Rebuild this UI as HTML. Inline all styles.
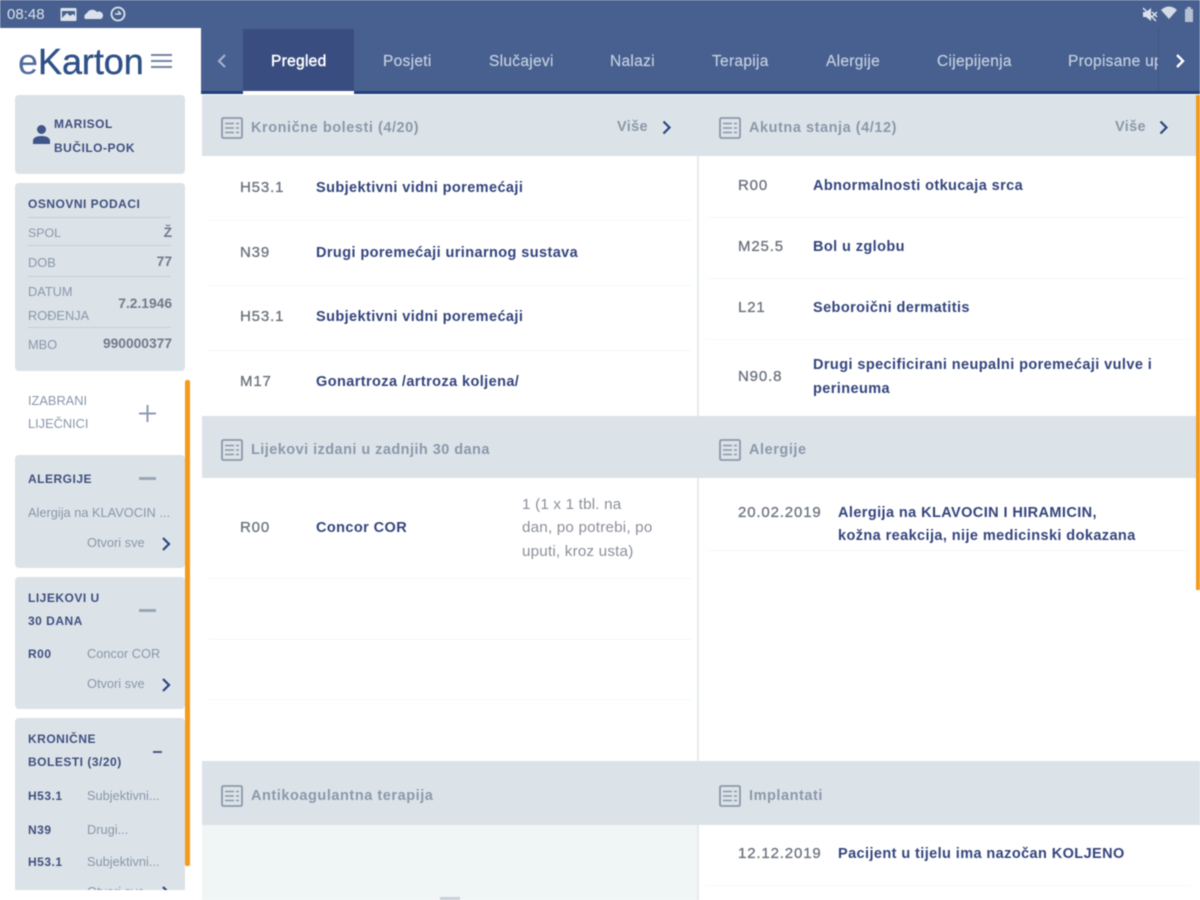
<!DOCTYPE html>
<html><head><meta charset="utf-8"><style>
html,body{margin:0;padding:0;width:1200px;height:900px;overflow:hidden;background:#fff}
body{font-family:"Liberation Sans",sans-serif;position:relative}
#r{position:absolute;left:0;top:0;width:1200px;height:900px;overflow:hidden;filter:blur(.6px)}
.b{position:absolute}
.t{position:absolute;white-space:nowrap;line-height:24px;height:24px}
.g{background:#dce3e8}
.card{position:absolute;left:15px;width:170px;background:#dce3e8;border-radius:4px}
.h{font-size:14.5px;color:#7f8ea3;letter-spacing:.55px;font-weight:700;opacity:.88}
.code{font-size:15px;color:#6c737e;letter-spacing:.85px;font-weight:400;-webkit-text-stroke:.3px #6c737e;margin-top:1px}
.name{font-size:14.5px;color:#33447c;letter-spacing:.41px;font-weight:700;margin-top:1px}
.tab{font-size:15.5px;color:#c3cfe0;top:50px;letter-spacing:.3px;-webkit-text-stroke:.2px #c3cfe0}
.s{font-size:12px;color:#3f4f80;font-weight:700;letter-spacing:.5px}
.l{font-size:12.8px;color:#8997ab}
.v{font-size:13.8px;color:#6f7a8a}
.line{position:absolute;height:1px;background:#c4ced7}
.sep{position:absolute;height:1px;background:#f6f7f8}
.p{font-size:15.2px;color:#8a8f98;letter-spacing:.2px;margin-top:1px}
svg{position:absolute;overflow:visible}
</style></head><body><div id="r">

<div class="b" style="left:0;top:0;width:1200px;height:28px;background:#48608f"></div>
<div class="t" style="left:7px;top:3px;font-size:15px;color:#dbe2ec">08:48</div>
<svg style="left:60px;top:7px" width="17" height="15"><rect x="0.5" y="1" width="16" height="13" rx="1" fill="#dbe2ec"/><path d="M2 11 7 6 10 9 13 7 15 9V4H2Z" fill="#48608f"/></svg>
<svg style="left:84px;top:8px" width="18" height="11"><path d="M1 11a4 4 0 0 1 2-6 6 6 0 0 1 10-1 4 4 0 0 1 4 7Z" fill="#dbe2ec"/></svg>
<svg style="left:110px;top:6px" width="17" height="17"><circle cx="8" cy="8" r="6.5" fill="none" stroke="#dbe2ec" stroke-width="1.8"/><path d="M5 8h6M8 5l3 3" stroke="#dbe2ec" stroke-width="1.5" fill="none"/></svg>
<svg style="left:1142px;top:7px" width="16" height="15"><path d="M1 5h3l5-4v13l-5-4H1Z" fill="#dbe2ec"/><path d="M10 5l5 5M15 5l-5 5M1 1l13 13" stroke="#dbe2ec" stroke-width="1.5"/></svg>
<svg style="left:1161px;top:6px" width="17" height="14"><path d="M0 4a11 11 0 0 1 16 0L8 13Z" fill="#d3dbe6"/></svg>
<svg style="left:1184px;top:7px" width="10" height="15"><path d="M1 2h2V0h4v2h2v13H1Z" fill="#b5c1d3"/></svg>

<div class="b" style="left:0;top:28px;width:201px;height:872px;background:#fff"></div>
<div class="t" style="left:18px;top:44px;height:36px;line-height:36px;font-size:36px;letter-spacing:-.05px;color:#2f5086;-webkit-text-stroke:.4px #2f5086"><span style="color:#4f6c9c;-webkit-text-stroke:0">e</span>Karton</div>
<div class="b" style="left:151px;top:54px;width:21px;height:2px;background:#7485a6"></div>
<div class="b" style="left:151px;top:60px;width:21px;height:2px;background:#7485a6"></div>
<div class="b" style="left:151px;top:66px;width:21px;height:2px;background:#7485a6"></div>

<div class="b" style="left:201px;top:28px;width:999px;height:63px;background:#48608f"></div>
<div class="b" style="left:201px;top:91px;width:999px;height:3px;background:#22417c"></div>
<div class="b" style="left:243px;top:29px;width:111px;height:62px;background:#3a4d80"></div>
<div class="b" style="left:243px;top:91px;width:111px;height:3px;background:#fff"></div>
<svg style="left:217px;top:54px" width="10" height="14"><path d="M8 1 2 7l6 6" fill="none" stroke="#a9b7cd" stroke-width="2"/></svg>
<div class="t tab" style="left:271px;color:#fff;font-size:15.5px;-webkit-text-stroke:.45px #fff">Pregled</div>
<div class="t tab" style="left:383px">Posjeti</div>
<div class="t tab" style="left:489px">Slučajevi</div>
<div class="t tab" style="left:610px">Nalazi</div>
<div class="t tab" style="left:712px">Terapija</div>
<div class="t tab" style="left:826px">Alergije</div>
<div class="t tab" style="left:937px">Cijepijenja</div>
<div class="b" style="left:1068px;top:50px;width:90px;height:24px;overflow:hidden"><div class="t tab" style="left:0;top:0">Propisane upute</div></div>
<div class="b" style="left:1158px;top:28px;width:1px;height:63px;background:#3f5585"></div>
<svg style="left:1174px;top:54px" width="12" height="14"><path d="M3 1l6 6-6 6" fill="none" stroke="#fff" stroke-width="2.4"/></svg>

<!-- sidebar -->
<div class="card" style="top:95px;height:79px"></div>
<svg style="left:32px;top:124px" width="19" height="21"><circle cx="9.5" cy="5.5" r="4.5" fill="#3f5488"/><path d="M1 20v-3c0-3 3-5 8.500-5s8.500 2 8.500 5v3Z" fill="#3f5488"/></svg>
<div class="t s" style="left:54px;top:112px">MARISOL</div>
<div class="t s" style="left:54px;top:136px">BUČILO-POK</div>

<div class="card" style="top:183px;height:188px"></div>
<div class="t s" style="left:28px;top:192px">OSNOVNI PODACI</div>
<div class="line" style="left:28px;top:217px;width:143px"></div>
<div class="t l" style="left:28px;top:221px;font-size:12.4px">SPOL</div><div class="t v" style="right:1028px;top:221px;font-weight:700">Ž</div>
<div class="line" style="left:28px;top:245px;width:143px"></div>
<div class="t l" style="left:28px;top:251px">DOB</div><div class="t v" style="right:1028px;top:250px;font-weight:700">77</div>
<div class="line" style="left:28px;top:276px;width:143px"></div>
<div class="t l" style="left:28px;top:280px">DATUM</div>
<div class="t l" style="left:28px;top:304px">ROĐENJA</div>
<div class="t v" style="right:1028px;top:292px;font-weight:700">7.2.1946</div>
<div class="line" style="left:28px;top:327px;width:143px"></div>
<div class="t l" style="left:28px;top:333px">MBO</div><div class="t v" style="right:1028px;top:332px;font-weight:700">990000377</div>

<div class="t l" style="left:28px;top:389px">IZABRANI</div>
<div class="t l" style="left:28px;top:412px">LIJEČNICI</div>
<svg style="left:139px;top:405px" width="17" height="17"><path d="M8.500 0v17M0 8.500h17" stroke="#8e9bb0" stroke-width="2"/></svg>

<div class="b" style="left:185px;top:380px;width:5px;height:486px;background:#f39a1f;border-radius:2px"></div>

<div class="card" style="top:455px;height:113px"></div>
<div class="t s" style="left:28px;top:467px">ALERGIJE</div>
<div class="b" style="left:139px;top:477px;width:17px;height:3px;background:#9aa6b8"></div>
<div class="t l" style="left:28px;top:501px">Alergija na KLAVOCIN ...</div>
<div class="t l" style="left:87px;top:531px">Otvori sve</div>
<svg style="left:161px;top:537px" width="11" height="14"><path d="M2 1l6 6-6 6" fill="none" stroke="#2e4482" stroke-width="2.2"/></svg>

<div class="card" style="top:577px;height:132px"></div>
<div class="t s" style="left:28px;top:586px">LIJEKOVI U</div>
<div class="t s" style="left:28px;top:609px">30 DANA</div>
<div class="b" style="left:139px;top:609px;width:17px;height:3px;background:#9aa6b8"></div>
<div class="t s" style="left:28px;top:642px">R00</div>
<div class="t l" style="left:87px;top:642px">Concor COR</div>
<div class="t l" style="left:87px;top:672px">Otvori sve</div>
<svg style="left:161px;top:678px" width="11" height="14"><path d="M2 1l6 6-6 6" fill="none" stroke="#2e4482" stroke-width="2.2"/></svg>

<div class="b" style="left:15px;top:718px;width:170px;height:172px;overflow:hidden;background:#dce3e8;border-radius:4px 4px 0 0">
<div class="t s" style="left:13px;top:9px">KRONIČNE</div>
<div class="t s" style="left:13px;top:32px">BOLESTI (3/20)</div>
<div class="b" style="left:138px;top:33px;width:9px;height:2px;background:#4a5a88"></div>
<div class="t s" style="left:13px;top:66px">H53.1</div><div class="t l" style="left:72px;top:66px">Subjektivni...</div>
<div class="t s" style="left:13px;top:100px">N39</div><div class="t l" style="left:72px;top:100px">Drugi...</div>
<div class="t s" style="left:13px;top:132px">H53.1</div><div class="t l" style="left:72px;top:132px">Subjektivni...</div>
<div class="t l" style="left:72px;top:162px">Otvori sve</div>
<svg style="left:146px;top:168px" width="11" height="14"><path d="M2 1l6 6-6 6" fill="none" stroke="#2e4482" stroke-width="2.2"/></svg>
</div>

<!-- content -->
<div class="b g" style="left:202px;top:95px;width:998px;height:61px"></div>
<div class="b g" style="left:202px;top:416px;width:998px;height:62px"></div>
<div class="b g" style="left:202px;top:761px;width:998px;height:64px"></div>
<div class="b" style="left:202px;top:825px;width:495px;height:75px;background:#f0f5f5"></div>
<div class="b" style="left:697px;top:156px;width:2px;height:260px;background:#e6ebee"></div>
<div class="b" style="left:697px;top:478px;width:2px;height:283px;background:#e6ebee"></div>
<div class="b" style="left:697px;top:825px;width:2px;height:75px;background:#e6ebee"></div>
<div class="b" style="left:1196px;top:95px;width:4px;height:495px;background:#f39a1f"></div>

<svg width="0" height="0" style="position:absolute"><defs><g id="ic" fill="none" stroke="#8a98ab" stroke-width="1.800"><rect x="1" y="1" width="20" height="20" rx="1.500"/><path d="M4 6.500h9M15 6.500h3M4 11h9M15 11h3M4 15.500h9M15 15.500h3" stroke-width="1.400"/></g></defs></svg>
<svg style="left:221px;top:117px" width="22" height="22"><use href="#ic"/></svg>
<svg style="left:719px;top:117px" width="22" height="22"><use href="#ic"/></svg>
<svg style="left:221px;top:439px" width="22" height="22"><use href="#ic"/></svg>
<svg style="left:719px;top:439px" width="22" height="22"><use href="#ic"/></svg>
<svg style="left:221px;top:785px" width="22" height="22"><use href="#ic"/></svg>
<svg style="left:719px;top:785px" width="22" height="22"><use href="#ic"/></svg>

<div class="t h" style="left:251px;top:116px">Kronične bolesti (4/20)</div>
<div class="t h" style="left:749px;top:116px">Akutna stanja (4/12)</div>
<div class="t h" style="left:251px;top:438px;letter-spacing:.45px">Lijekovi izdani u zadnjih 30 dana</div>
<div class="t h" style="left:749px;top:438px">Alergije</div>
<div class="t h" style="left:251px;top:784px">Antikoagulantna terapija</div>
<div class="t h" style="left:749px;top:784px">Implantati</div>
<div class="t h" style="left:617px;top:115px;letter-spacing:.35px">Više</div>
<div class="t h" style="left:1115px;top:115px;letter-spacing:.35px">Više</div>
<svg style="left:661px;top:120px" width="12" height="15"><path d="M2.500 1.500l6 6-6 6" fill="none" stroke="#2e4482" stroke-width="2.200"/></svg>
<svg style="left:1158px;top:120px" width="12" height="15"><path d="M2.500 1.500l6 6-6 6" fill="none" stroke="#2e4482" stroke-width="2.200"/></svg>

<div class="t code" style="left:240px;top:175px">H53.1</div><div class="t name" style="left:316px;top:175px">Subjektivni vidni poremećaji</div>
<div class="sep" style="left:208px;top:220px;width:484px"></div>
<div class="t code" style="left:240px;top:240px">N39</div><div class="t name" style="left:316px;top:240px">Drugi poremećaji urinarnog sustava</div>
<div class="sep" style="left:208px;top:285px;width:484px"></div>
<div class="t code" style="left:240px;top:304px">H53.1</div><div class="t name" style="left:316px;top:304px">Subjektivni vidni poremećaji</div>
<div class="sep" style="left:208px;top:350px;width:484px"></div>
<div class="t code" style="left:240px;top:369px">M17</div><div class="t name" style="left:316px;top:369px">Gonartroza /artroza koljena/</div>

<div class="t code" style="left:738px;top:173px">R00</div><div class="t name" style="left:813px;top:173px">Abnormalnosti otkucaja srca</div>
<div class="sep" style="left:706px;top:217px;width:484px"></div>
<div class="t code" style="left:738px;top:234px">M25.5</div><div class="t name" style="left:813px;top:234px">Bol u zglobu</div>
<div class="sep" style="left:706px;top:278px;width:484px"></div>
<div class="t code" style="left:738px;top:295px">L21</div><div class="t name" style="left:813px;top:295px">Seboroični dermatitis</div>
<div class="sep" style="left:706px;top:339px;width:484px"></div>
<div class="t code" style="left:738px;top:364px">N90.8</div>
<div class="t name" style="left:813px;top:352px">Drugi specificirani neupalni poremećaji vulve i</div>
<div class="t name" style="left:813px;top:376px">perineuma</div>

<div class="t code" style="left:240px;top:515px">R00</div><div class="t name" style="left:316px;top:515px">Concor COR</div>
<div class="t p" style="left:522px;top:492px">1 (1 x 1 tbl. na</div>
<div class="t p" style="left:522px;top:515px">dan, po potrebi, po</div>
<div class="t p" style="left:522px;top:539px">uputi, kroz usta)</div>
<div class="sep" style="left:208px;top:578px;width:484px"></div>
<div class="sep" style="left:208px;top:639px;width:484px"></div>
<div class="sep" style="left:208px;top:699px;width:484px"></div>

<div class="t code" style="left:738px;top:500px">20.02.2019</div>
<div class="t name" style="left:838px;top:500px">Alergija na KLAVOCIN I HIRAMICIN,</div>
<div class="t name" style="left:838px;top:523px">kožna reakcija, nije medicinski dokazana</div>
<div class="sep" style="left:706px;top:550px;width:484px"></div>

<div class="t code" style="left:738px;top:841px">12.12.2019</div>
<div class="t name" style="left:838px;top:841px">Pacijent u tijelu ima nazočan KOLJENO</div>
<div class="sep" style="left:706px;top:885px;width:484px"></div>
<div class="b" style="left:440px;top:897px;width:20px;height:3px;background:#c8d0d8"></div>

</div></body></html>
